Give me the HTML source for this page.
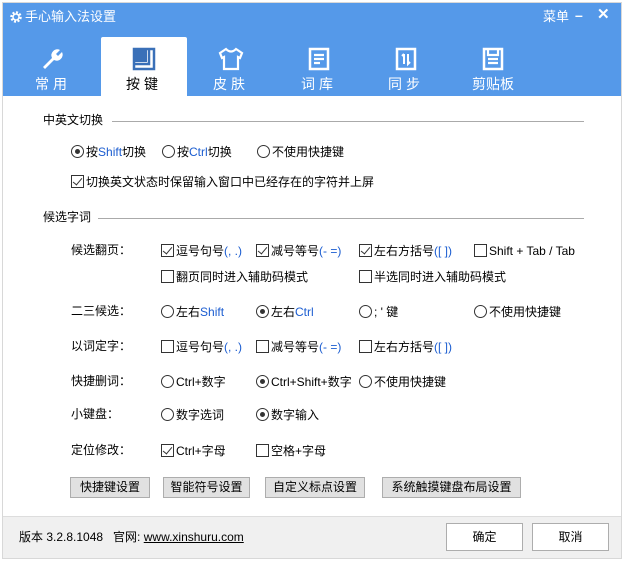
<!DOCTYPE html><html><head><meta charset="utf-8"><style>
*{margin:0;padding:0;box-sizing:border-box}
body{width:624px;height:561px;position:relative;background:#fff;font-family:"Liberation Sans","Noto Sans CJK SC",sans-serif;font-size:12px;color:#000;overflow:hidden}
.a{position:absolute;white-space:nowrap;line-height:14px}
.hdr{position:absolute;left:3px;top:3px;width:618px;height:93px;background:#5599e9}
.frame{position:absolute;left:2px;top:2px;width:620px;height:557px;border:1px solid #d8d8d8;pointer-events:none}
.w{color:#fff}
.tab{position:absolute;top:37px;width:86px;height:59px;text-align:center;color:#fff;font-size:14px;letter-spacing:4px}
.tab svg{display:block;margin:10px auto 3px}
.act{background:#fff;color:#000;border-radius:2px 2px 0 0}
.cb{display:inline-block;width:13px;height:13px;border:1px solid #333;vertical-align:-2px;margin-right:2px;position:relative;background:#fff}
.cb.c::after{content:"";position:absolute;left:3px;top:0px;width:4px;height:8px;border:solid #333;border-width:0 1.5px 1.5px 0;transform:rotate(40deg)}
.rd{display:inline-block;width:13px;height:13px;border:1px solid #333;border-radius:50%;vertical-align:-2px;margin-right:2px;position:relative;background:#fff}
.rd.c::after{content:"";position:absolute;left:3px;top:3px;width:5px;height:5px;border-radius:50%;background:#333}
.bl{color:#1a5cd0}
.line{position:absolute;height:1px;background:#aaa}
.btn{position:absolute;top:477px;height:21px;background:#e1e1e1;border:1px solid #adadad;text-align:center;line-height:19px}
.foot{position:absolute;left:3px;top:516px;width:618px;height:42px;background:#f0f0f0;border-top:1px solid #ddd}
.fb{position:absolute;top:523px;width:77px;height:28px;background:#fff;border:1px solid #adadad;text-align:center;line-height:26px}
</style></head><body>
<div class="hdr"></div>
<svg class="a" style="left:9px;top:10px" width="14" height="14" viewBox="0 0 14 14"><circle cx="7" cy="7" r="4.5" fill="none" stroke="#fff" stroke-width="2.5" stroke-dasharray="2 1.5"/><circle cx="7" cy="7" r="3" fill="none" stroke="#fff" stroke-width="1.5"/></svg>
<div class="a w" style="left:25px;top:10px;font-size:13px">手心输入法设置</div>
<div class="a w" style="left:543px;top:10px;font-size:13px">菜单</div>
<div class="a w" style="left:575px;top:8px;font-size:14px;font-weight:bold">–</div>
<div class="a w" style="left:597px;top:8px;font-size:15px;font-weight:bold">✕</div>
<div class="tab" style="left:10px"><svg width="24" height="24" viewBox="0 0 24 24"><path d="M2 20 L11 11 A6 6 0 0 1 19 3 L15 7 L17 9 L21 5 A6 6 0 0 1 13 13 L4 22Z" fill="#fff"/></svg>常用</div>
<div class="tab act" style="left:101px"><svg width="24" height="24" viewBox="0 0 24 24"><rect x="2" y="2" width="20" height="20" fill="#fff" stroke="#3a70b8" stroke-width="2.5"/><rect x="2" y="2" width="13" height="13" fill="#3a70b8"/><path d="M17 2V17H2" stroke="#3a70b8" stroke-width="2.5" fill="none"/></svg>按键</div>
<div class="tab" style="left:188px"><svg width="26" height="24" viewBox="0 0 26 24"><path d="M8 2 L2 6 L4 11 L6 10 V22 H20 V10 L22 11 L24 6 L18 2 Q13 7 8 2Z" fill="none" stroke="#fff" stroke-width="2.2"/></svg>皮肤</div>
<div class="tab" style="left:276px"><svg width="22" height="24" viewBox="0 0 22 24"><rect x="2" y="2" width="18" height="20" fill="none" stroke="#fff" stroke-width="2.5"/><path d="M6 8H16M6 12H16M6 16H12" stroke="#fff" stroke-width="2.2"/></svg>词库</div>
<div class="tab" style="left:363px"><svg width="22" height="24" viewBox="0 0 22 24"><rect x="2" y="2" width="18" height="20" fill="none" stroke="#fff" stroke-width="2.5"/><path d="M9 7V17M7 9L9 7M13 7V17L15 15" stroke="#fff" stroke-width="2" fill="none"/></svg>同步</div>
<div class="tab" style="left:450px;letter-spacing:0"><svg width="22" height="24" viewBox="0 0 22 24"><path d="M2 2H20V22H2Z" fill="none" stroke="#fff" stroke-width="2.5"/><path d="M6 2V8H16V2M6 12H16M6 16H16" stroke="#fff" stroke-width="2.2" fill="none"/></svg>剪贴板</div>

<div class="a" style="left:43px;top:113px">中英文切换</div><div class="line" style="left:112px;top:121px;width:472px"></div>
<div class="a" style="left:71px;top:145px"><span class="rd c"></span>按<span class="bl">Shift</span>切换</div>
<div class="a" style="left:162px;top:145px"><span class="rd"></span>按<span class="bl">Ctrl</span>切换</div>
<div class="a" style="left:257px;top:145px"><span class="rd"></span>不使用快捷键</div>
<div class="a" style="left:71px;top:175px"><span class="cb c"></span>切换英文状态时保留输入窗口中已经存在的字符并上屏</div>
<div class="a" style="left:43px;top:210px">候选字词</div><div class="line" style="left:98px;top:218px;width:486px"></div>

<div class="a" style="left:71px;top:243px">候选翻页：</div>
<div class="a" style="left:161px;top:244px"><span class="cb c"></span>逗号句号<span class="bl">(, .)</span></div>
<div class="a" style="left:256px;top:244px"><span class="cb c"></span>减号等号<span class="bl">(- =)</span></div>
<div class="a" style="left:359px;top:244px"><span class="cb c"></span>左右方括号<span class="bl">([ ])</span></div>
<div class="a" style="left:474px;top:244px"><span class="cb"></span>Shift + Tab / Tab</div>
<div class="a" style="left:161px;top:270px"><span class="cb"></span>翻页同时进入辅助码模式</div>
<div class="a" style="left:359px;top:270px"><span class="cb"></span>半选同时进入辅助码模式</div>

<div class="a" style="left:71px;top:304px">二三候选：</div>
<div class="a" style="left:161px;top:305px"><span class="rd"></span>左右<span class="bl">Shift</span></div>
<div class="a" style="left:256px;top:305px"><span class="rd c"></span>左右<span class="bl">Ctrl</span></div>
<div class="a" style="left:359px;top:305px"><span class="rd"></span>; ' 键</div>
<div class="a" style="left:474px;top:305px"><span class="rd"></span>不使用快捷键</div>

<div class="a" style="left:71px;top:339px">以词定字：</div>
<div class="a" style="left:161px;top:340px"><span class="cb"></span>逗号句号<span class="bl">(, .)</span></div>
<div class="a" style="left:256px;top:340px"><span class="cb"></span>减号等号<span class="bl">(- =)</span></div>
<div class="a" style="left:359px;top:340px"><span class="cb"></span>左右方括号<span class="bl">([ ])</span></div>

<div class="a" style="left:71px;top:374px">快捷删词：</div>
<div class="a" style="left:161px;top:375px"><span class="rd"></span>Ctrl+数字</div>
<div class="a" style="left:256px;top:375px"><span class="rd c"></span>Ctrl+Shift+数字</div>
<div class="a" style="left:359px;top:375px"><span class="rd"></span>不使用快捷键</div>

<div class="a" style="left:71px;top:407px">小键盘：</div>
<div class="a" style="left:161px;top:408px"><span class="rd"></span>数字选词</div>
<div class="a" style="left:256px;top:408px"><span class="rd c"></span>数字输入</div>

<div class="a" style="left:71px;top:443px">定位修改：</div>
<div class="a" style="left:161px;top:444px"><span class="cb c"></span>Ctrl+字母</div>
<div class="a" style="left:256px;top:444px"><span class="cb"></span>空格+字母</div>

<div class="btn" style="left:70px;width:80px">快捷键设置</div>
<div class="btn" style="left:163px;width:87px">智能符号设置</div>
<div class="btn" style="left:265px;width:100px">自定义标点设置</div>
<div class="btn" style="left:382px;width:139px">系统触摸键盘布局设置</div>

<div class="foot"></div>
<div class="a" style="left:19px;top:530px">版本 3.2.8.1048 &nbsp;&nbsp;官网: <u>www.xinshuru.com</u></div>
<div class="fb" style="left:446px">确定</div>
<div class="fb" style="left:532px">取消</div>
<div class="frame"></div>
</body></html>
